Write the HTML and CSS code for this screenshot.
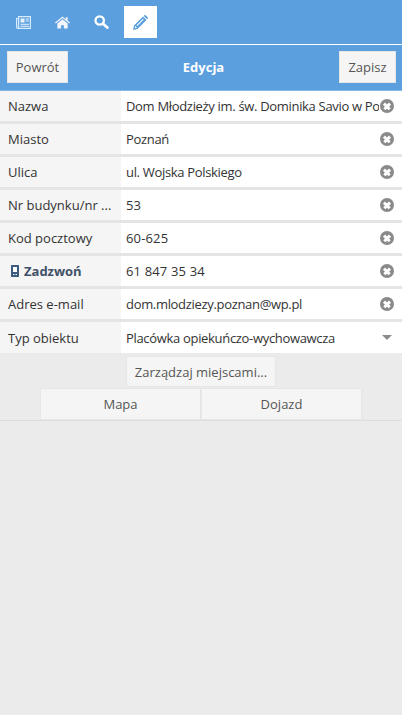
FILE: index.html
```html
<!DOCTYPE html>
<html lang="pl">
<head>
<meta charset="utf-8">
<title>Edycja</title>
<link rel="stylesheet" href="styles.css">
</head>
<body>
<nav class="tabs">
  <a class="tab"><svg class="ico" viewBox="0 0 15 13"><path fill="none" stroke="#d8ecff" stroke-width="1.200" d="M2.600.6h11.800v11.800H2.600zM2.600 2.500H.6v8.500a1.400 1.400 0 0 0 2 1.300"/><path fill="#fff" d="M4.500 2.500h4v4h-4zM9.500 2.500h3.500v1H9.500zM9.500 4.500h3.500v1H9.500zM4.500 7.800h8.500v1H4.500zM4.500 9.800h8.500v1H4.500z" opacity=".85"/></svg></a>
  <a class="tab"><svg class="ico" viewBox="0 0 16 13"><path fill="#f2f6fb" d="M8 0 0 6.600l.8 1L8 1.800l7.200 5.800.8-1-2.500-2V.8h-2v2.300zM8 3 2.500 7.500V13h4V9.300h3V13h4V7.500z"/></svg></a>
  <a class="tab"><svg class="ico ico-s" viewBox="0 0 15 14"><circle cx="5.700" cy="5.500" r="4.200" fill="none" stroke="#fff" stroke-width="2.300"/><path d="m9 8.800 4.300 3.700" stroke="#fff" stroke-width="2.800" stroke-linecap="round"/></svg></a>
  <a class="tab is-active"><svg class="ico ico-p" viewBox="0 0 15 15"><path fill="#5b9fdf" d="M0 15 1 10.500 10 1.500l3.500 3.500-9 9zM11 .6a1.400 1.400 0 0 1 2 0l1.400 1.400a1.400 1.400 0 0 1 0 2l-.3.300L10.700.9z"/><path fill="#fff" d="M1.700 13.300 2.300 11l1.700 1.700zM3.500 10.300l6.500-6.500.7.700-6.500 6.500z"/></svg></a>
</nav>
<header class="bar">
  <button class="btn bar-btn" type="button">Powrót</button>
  <h1 class="title">Edycja</h1>
  <button class="btn bar-btn" type="button">Zapisz</button>
</header>
<main class="form">
  <div class="row"><div class="lab">Nazwa</div><div class="val"><span class="txt">Dom Młodzieży im. św. Dominika Savio w Poznaniu</span><span class="clr"></span></div></div>
  <div class="row"><div class="lab">Miasto</div><div class="val"><span class="txt">Poznań</span><span class="clr"></span></div></div>
  <div class="row"><div class="lab">Ulica</div><div class="val"><span class="txt">ul. Wojska Polskiego</span><span class="clr"></span></div></div>
  <div class="row"><div class="lab">Nr budynku/nr ...</div><div class="val"><span class="txt txt-num">53</span><span class="clr"></span></div></div>
  <div class="row"><div class="lab">Kod pocztowy</div><div class="val"><span class="txt txt-num">60-625</span><span class="clr"></span></div></div>
  <div class="row"><div class="lab lab-call"><svg class="phone" viewBox="0 0 8 12"><path fill="#3a5a80" d="M.8 0h6.400a.8.800 0 0 1 .8.800v10.400a.8.800 0 0 1-.8.800H.8a.8.800 0 0 1-.8-.8V.8A.8.800 0 0 1 .8 0z"/><path fill="#fff" d="M2 2h4v5H2zM2 9h1v1H2zM3.500 9h1v1h-1zM5 9h1v1H5z"/></svg>Zadzwoń</div><div class="val"><span class="txt txt-num">61 847 35 34</span><span class="clr"></span></div></div>
  <div class="row"><div class="lab">Adres e-mail</div><div class="val"><span class="txt">dom.mlodziezy.poznan@wp.pl</span><span class="clr"></span></div></div>
  <div class="row row-last"><div class="lab">Typ obiektu</div><div class="val"><span class="txt">Placówka opiekuńczo-wychowawcza</span><span class="caret"></span></div></div>
</main>
<div class="actions">
  <button class="btn manage" type="button">Zarządzaj miejscami...</button>
  <div class="pair">
    <button class="btn half" type="button">Mapa</button>
    <button class="btn half" type="button">Dojazd</button>
  </div>
</div>
</body>
</html>
```
FILE: styles.css
```css
* { box-sizing: border-box; }
html, body { margin: 0; height: 100%; }
body { background: #ebebeb; font-family: "Open Sans", sans-serif; font-size: 13px; color: #333; overflow: hidden; }
.tabs { height: 45px; background: #5b9fdf; border-bottom: 1px solid #fff; display: flex; align-items: flex-start; padding: 6px 0 0 7px; }
.tab { width: 33px; height: 32px; display: flex; align-items: center; justify-content: center; margin-right: 6px; }
.tab.is-active { background: #fff; }
.ico { width: 15px; height: 13px; }
.ico-s { width: 15px; height: 14px; }
.ico-p { width: 15px; height: 15px; }
.bar { height: 46px; background: #5b9fdf; border-bottom: 1px solid #85b5e5; display: flex; justify-content: space-between; align-items: flex-start; padding: 6px 6px 0 7px; }
.title { margin: 0; font-size: 13px; font-weight: 700; color: #fff; line-height: 32px; }
.btn { font-family: inherit; font-size: 13px; color: #555; background: #f5f5f5; border: 1px solid #e6e6e6; border-radius: 0; padding: 0; height: 32px; }
.bar-btn { width: 61px; }
.bar-btn:last-child { width: 57px; }
.form { display: flex; flex-direction: column; }
.row { display: flex; height: 33px; border-bottom: 3px solid #e5e5e5; background: #fff; }
.row-last { height: 31px; border-bottom: 0; }
.lab { width: 121px; flex: none; background: #f5f5f5; padding-left: 8px; line-height: 30px; white-space: nowrap; overflow: hidden; }
.row-last .lab, .row-last .val { line-height: 32px; }
.lab-call { font-weight: 700; color: #3f5168; display: flex; align-items: center; padding-left: 11px; }
.phone { width: 8px; height: 12px; margin-right: 5px; }
.val { flex: 1; min-width: 0; display: flex; align-items: center; padding-left: 5px; padding-right: 8px; line-height: 30px; }
.txt { flex: 1; min-width: 0; white-space: nowrap; overflow: hidden; letter-spacing: -0.32px; margin-right: 1px; }
.txt-num { letter-spacing: 0.15px; }
.clr { width: 14px; height: 14px; flex: none; border-radius: 50%; background: #8a8a8a; position: relative; }
.clr::before, .clr::after { content: ""; position: absolute; left: 3px; top: 5.750px; width: 8px; height: 2.500px; background: #fff; }
.clr::before { transform: rotate(45deg); }
.clr::after { transform: rotate(-45deg); }
.caret { width: 0; height: 0; flex: none; border-left: 5px solid transparent; border-right: 5px solid transparent; border-top: 5px solid #8a8a8a; margin-right: 2px; }
.actions { display: flex; flex-direction: column; align-items: center; padding-top: 3px; border-bottom: 1px solid #ddd; }
.manage { width: 150px; height: 31px; }
.pair { display: flex; width: 322px; margin-top: 1px; }
.half { flex: 1; height: 32px; }
```
